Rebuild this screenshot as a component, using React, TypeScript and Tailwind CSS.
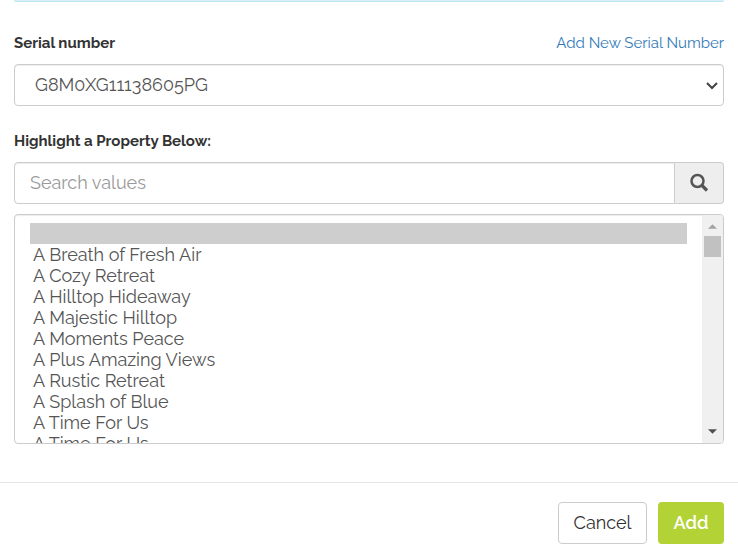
import { useState } from "react";

const serialNumbers = ["G8M0XG11138605PG"];

const properties = [
    "A Breath of Fresh Air",
    "A Cozy Retreat",
    "A Hilltop Hideaway",
    "A Majestic Hilltop",
    "A Moments Peace",
    "A Plus Amazing Views",
    "A Rustic Retreat",
    "A Splash of Blue",
    "A Time For Us",
    "A Time For Us",
];

const SearchIcon = () => (
    <svg className="size-5" viewBox="0 0 20 20" fill="none" stroke="#555" aria-hidden="true">
        <circle cx="8.5" cy="8" r="6" strokeWidth="2.5" />
        <path d="M13 12.5L18 17.5" strokeWidth="3.2" />
    </svg>
);

// Classic scrollbar with arrows, drawn beside the list
const ListScrollbar = () => (
    <div className="flex w-[21px] shrink-0 flex-col items-center bg-[#f0f0f0] pb-[9px] pt-[9px]" aria-hidden="true">
        <svg className="h-[5px] w-[9px]" viewBox="0 0 10 5" fill="#a3a3a3">
            <path d="M5 0L10 5H0z" />
        </svg>
        <div className="mt-[7px] h-[21px] w-[17px] bg-[#c1c1c1]" />
        <svg className="mt-auto h-[5px] w-[9px]" viewBox="0 0 10 5" fill="#505050">
            <path d="M0 0H10L5 5z" />
        </svg>
    </div>
);

export default function App() {
    const [selected, setSelected] = useState("0");
    const [search, setSearch] = useState("");

    return (
        <div className="bg-white font-[Raleway,Lato,sans-serif] text-[#333]">
            <div className="px-[14px] pb-[38px]">
                <div className="h-[2px] rounded-b-sm border-b border-[#bce8f1] bg-[#d9edf7]" />

                <div className="flex items-center justify-between pb-[9px] pt-[29px] leading-6">
                    <label htmlFor="serial" className="text-[15px] font-bold">
                        Serial number
                    </label>
                    <a href="#" className="text-[15px] text-[#337ab7]">
                        Add New Serial Number
                    </a>
                </div>
                <div className="relative">
                    <select
                        id="serial"
                        className="block h-[42px] w-full appearance-none rounded border border-[#ccc] bg-white pb-[2px] pl-5 pr-8 text-[18px] text-[#555] shadow-[inset_0_1px_1px_rgba(0,0,0,0.075)] [font-variant-ligatures:no-contextual]"
                    >
                        {serialNumbers.map((serial) => (
                            <option key={serial}>{serial}</option>
                        ))}
                    </select>
                    <svg
                        className="pointer-events-none absolute right-[6px] top-[18px] h-[8px] w-[12px]"
                        viewBox="0 0 12 8"
                        fill="none"
                        stroke="#444"
                        strokeWidth="2"
                        aria-hidden="true"
                    >
                        <path d="M1 1L6 6L11 1" />
                    </svg>
                </div>

                <label htmlFor="search" className="block pb-[9px] pt-[23px] text-[15px] font-bold leading-6">
                    Highlight a Property Below:
                </label>
                <div className="flex h-[42px]">
                    <input
                        id="search"
                        type="text"
                        placeholder="Search values"
                        value={search}
                        onChange={(e) => setSearch(e.target.value)}
                        className="min-w-0 flex-1 rounded-l border border-[#ccc] px-[15px] pb-[2px] text-[18px] text-[#555] shadow-[inset_0_1px_1px_rgba(0,0,0,0.075)] placeholder:text-[#999]"
                    />
                    <button
                        type="button"
                        aria-label="Search"
                        className="flex w-[49px] items-center justify-center rounded-r border border-l-0 border-[#ccc] bg-[#eee]"
                    >
                        <SearchIcon />
                    </button>
                </div>

                <div className="mt-[10px] flex h-[230px] overflow-hidden rounded border border-[#ccc] shadow-[inset_0_1px_1px_rgba(0,0,0,0.075)]">
                    <select
                        size={10}
                        aria-label="Properties"
                        value={selected}
                        onChange={(e) => setSelected(e.target.value)}
                        className="h-full min-w-0 flex-1 px-[15px] pt-2 text-[18px] text-[#555] outline-none [scrollbar-width:none]"
                    >
                        <option value="0" className="h-[21px] min-h-0 px-[3px] py-0 leading-[21px]"></option>
                        {properties.map((property, index) => (
                            <option key={index} value={index + 1} className="h-[21px] min-h-0 px-[3px] py-0 leading-[21px]">
                                {property}
                            </option>
                        ))}
                    </select>
                    <ListScrollbar />
                </div>
            </div>

            <div className="flex justify-end gap-[11px] border-t border-[#e5e5e5] px-[14px] pb-2 pt-[19px]">
                <button type="button" className="h-[42px] w-[89px] rounded border border-[#ccc] bg-white pb-[2px] text-[18px]">
                    Cancel
                </button>
                <button type="button" className="h-[42px] w-[66px] rounded bg-[#b2d235] pb-[2px] text-[18px] font-semibold text-white">
                    Add
                </button>
            </div>
        </div>
    );
}
